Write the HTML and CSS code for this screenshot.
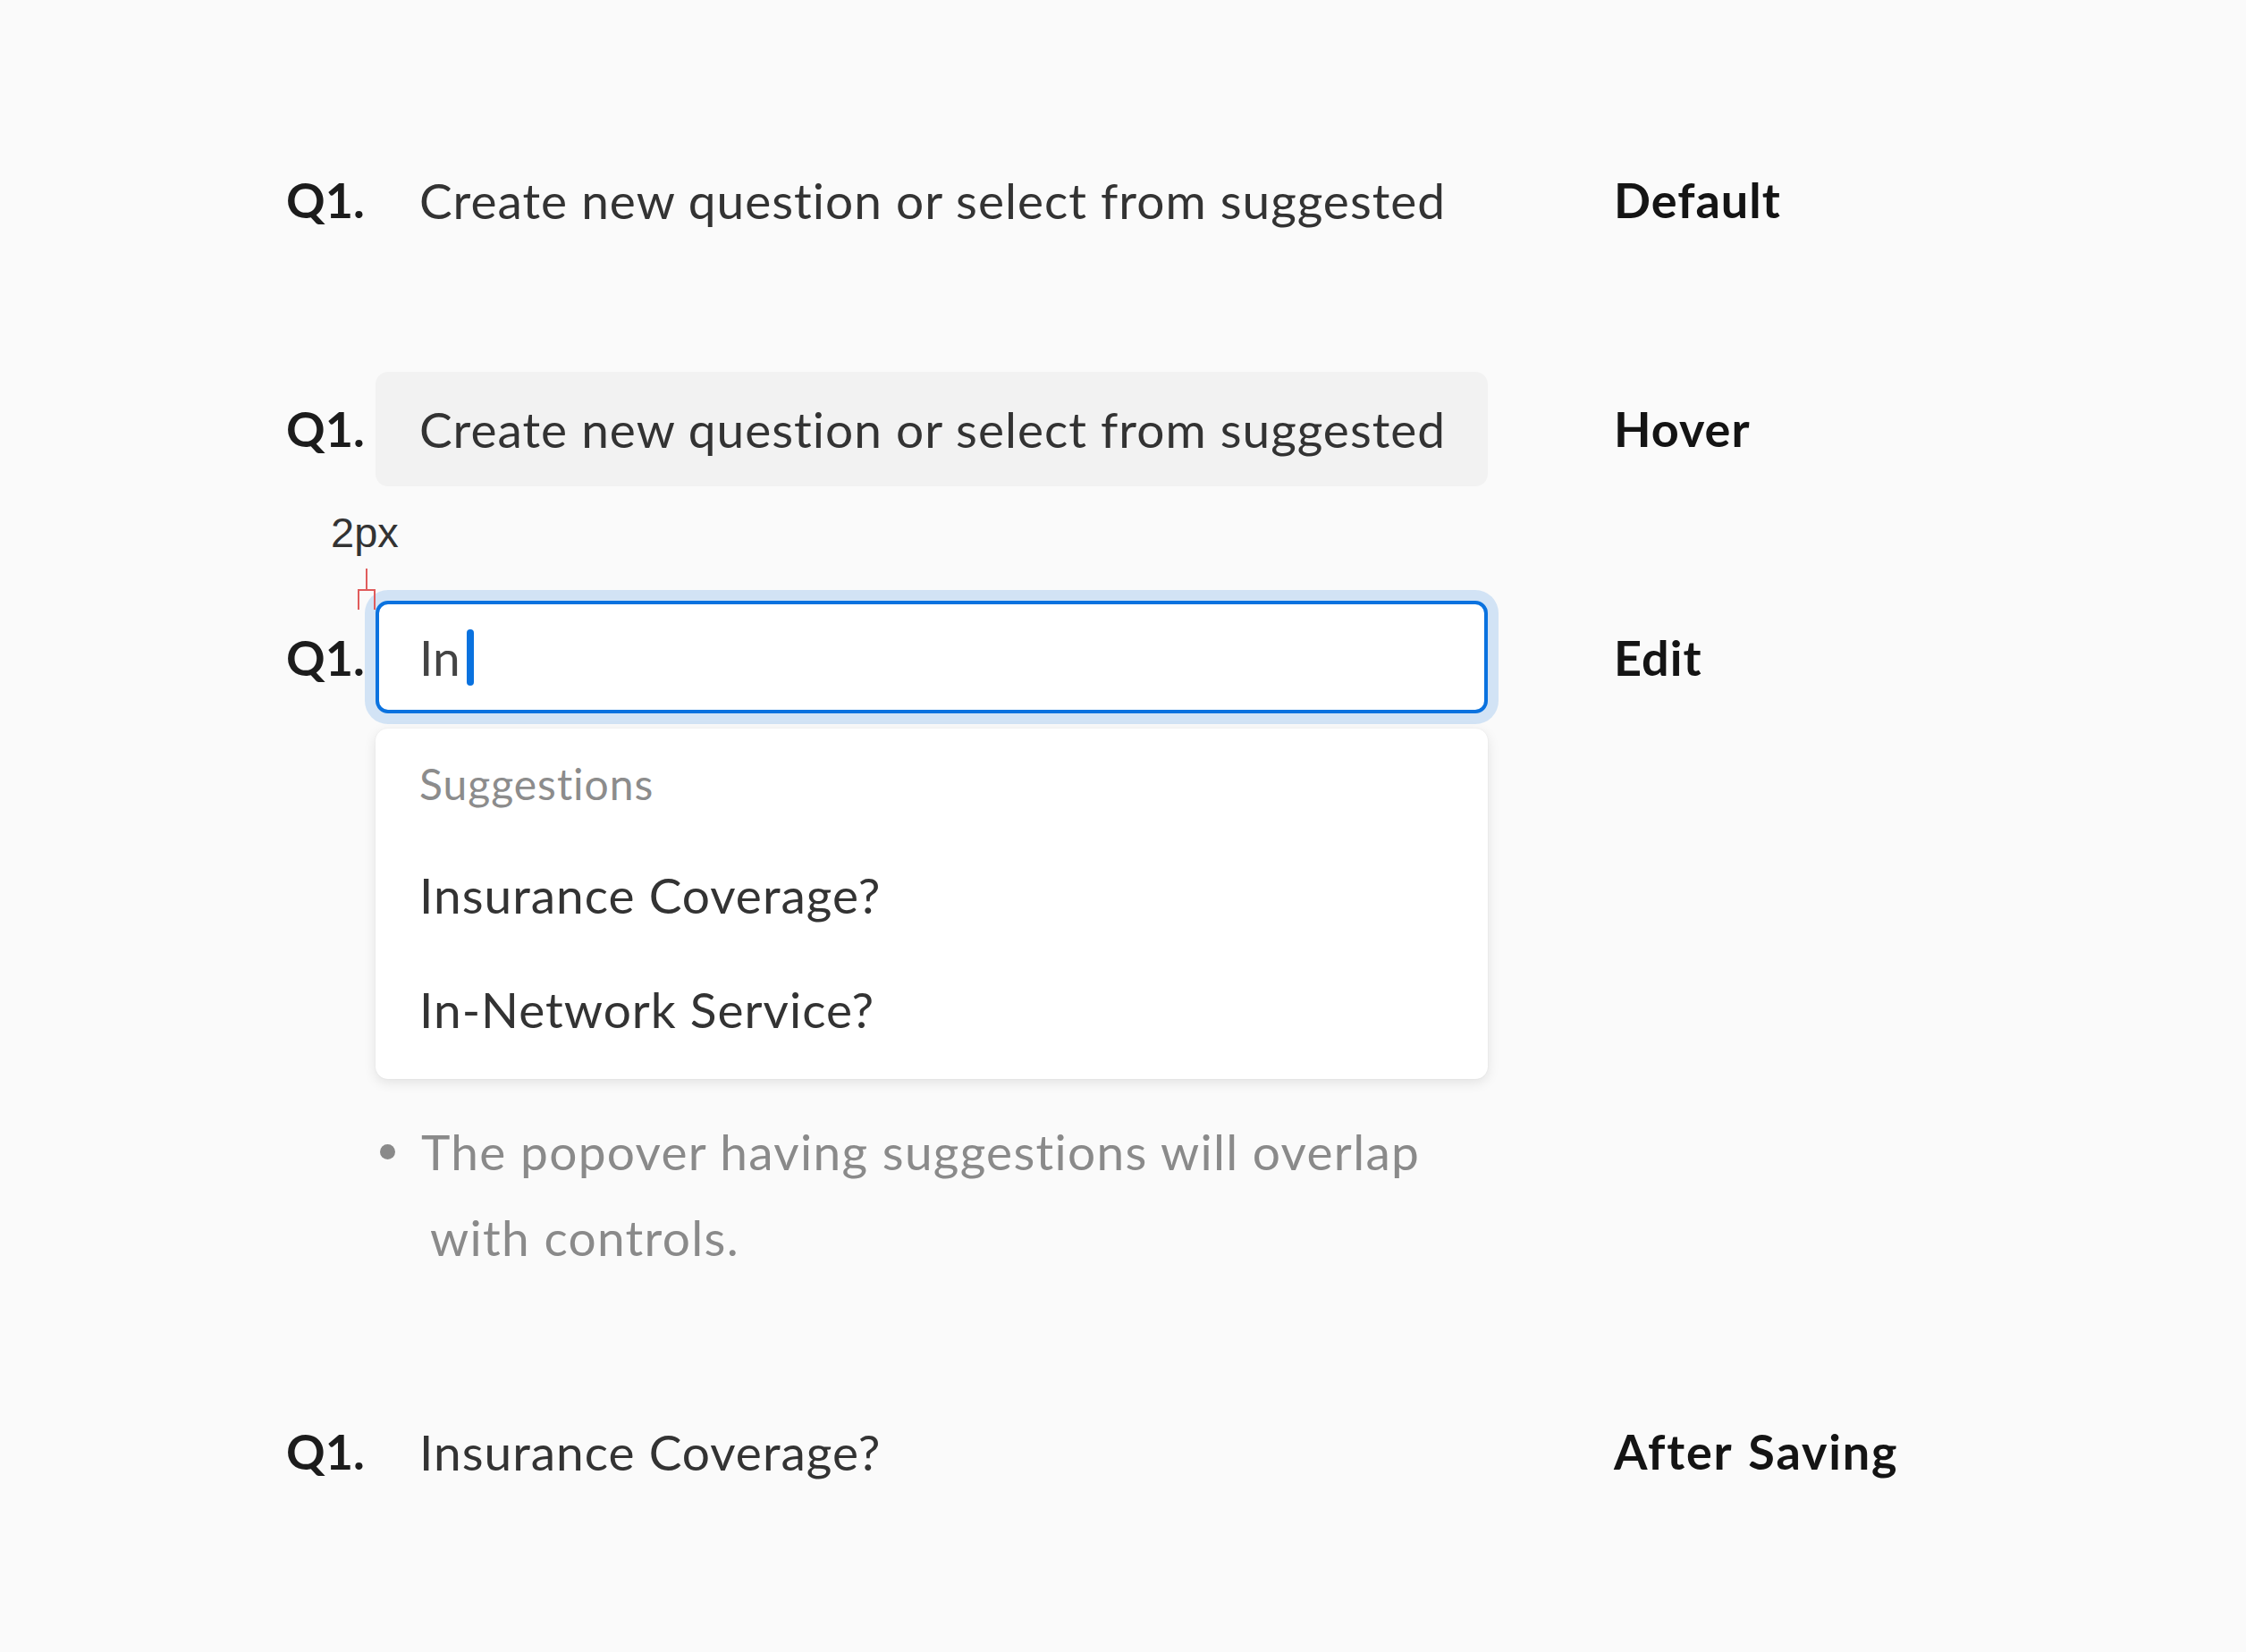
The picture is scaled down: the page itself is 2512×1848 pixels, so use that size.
FILE: index.html
```html
<!DOCTYPE html>
<html>
<head>
<meta charset="utf-8">
<link rel="stylesheet" href="styles.css">
</head>
<body>
<main class="page">
  <section class="row row-default">
    <div class="qnum">Q1.</div>
    <div class="field">Create new question or select from suggested</div>
    <div class="state">Default</div>
  </section>

  <section class="row row-hover">
    <div class="qnum">Q1.</div>
    <div class="field field-hover">Create new question or select from suggested</div>
    <div class="state">Hover</div>
  </section>

  <section class="row row-edit">
    <div class="qnum">Q1.</div>
    <div class="edit-col">
      <div class="field field-edit"><span class="typed">In</span><span class="caret"></span></div>
      <div class="popover">
        <div class="pop-head">Suggestions</div>
        <div class="pop-item">Insurance Coverage?</div>
        <div class="pop-item">In-Network Service?</div>
      </div>
      <div class="note">
        <div class="note-line"><span class="bullet"></span><span>The popover having suggestions will overlap</span></div>
        <div class="note-line note-cont">with controls.</div>
      </div>
    </div>
    <div class="state">Edit</div>
    <div class="annot">2px</div>
    <div class="marker">
      <span class="marker-stem"></span>
      <span class="marker-bracket"></span>
    </div>
  </section>

  <section class="row row-saved">
    <div class="qnum">Q1.</div>
    <div class="field">Insurance Coverage?</div>
    <div class="state state-wide">After Saving</div>
  </section>
</main>
</body>
</html>
```

FILE: styles.css
```css
* { box-sizing: border-box; }
html, body { margin: 0; padding: 0; }
body {
  background: #fafafa;
  width: 2512px;
  height: 1848px;
  font-family: Lato, "Open Sans", sans-serif;
  color: #333;
  overflow: hidden;
}
.page {
  padding: 160px 0 0 320px;
  display: flex;
  flex-direction: column;
  gap: 128px;
}
.row {
  position: relative;
  display: grid;
  grid-template-columns: 100px 1244px auto;
  align-items: start;
}
.qnum {
  height: 128px;
  line-height: 128px;
  font-weight: 700;
  font-size: 54px;
  color: #1c1c1c;
}
.field {
  height: 128px;
  line-height: 128px;
  padding-left: 49px;
  font-size: 55px;
  letter-spacing: 1px;
  color: #333;
  border-radius: 14px;
  white-space: nowrap;
}
.field-hover { background: #f2f2f2; }
.state {
  margin-left: 141px;
  height: 128px;
  line-height: 128px;
  font-weight: 700;
  font-size: 54px;
  letter-spacing: 1px;
  color: #141414;
}
.state-wide { word-spacing: 3px; letter-spacing: 1.8px; }
.edit-col { display: flex; flex-direction: column; }
.field-edit {
  height: 126px;
  line-height: 118px;
  padding-left: 45px;
  background: #fff;
  border: 4px solid #0a72df;
  border-radius: 14px;
  box-shadow: 0 0 0 12px #d2e3f5;
  display: flex;
  align-items: center;
}
.typed { color: #444; letter-spacing: 0; }
.caret {
  display: inline-block;
  width: 8px;
  height: 63px;
  margin-left: 7px;
  border-radius: 4px;
  background: #0a72df;
}
.popover {
  margin-top: 17px;
  background: #fff;
  border-radius: 14px;
  padding: 16px 0 14px;
  box-shadow: 0 4px 14px rgba(0,0,0,0.10), 0 0 2px rgba(0,0,0,0.06);
}
.pop-head {
  height: 92px;
  line-height: 92px;
  margin-bottom: 14px;
  padding-left: 49px;
  font-size: 48px;
  letter-spacing: 1px;
  color: #8c8c8c;
}
.pop-item {
  height: 128px;
  line-height: 128px;
  padding-left: 49px;
  font-size: 55px;
  letter-spacing: 1px;
  color: #333;
}
.note {
  margin-top: 33px;
  font-size: 55px;
  letter-spacing: 1.3px;
  color: #8a8a8a;
}
.note-line {
  height: 96px;
  line-height: 96px;
  display: flex;
  align-items: center;
}
.bullet {
  display: inline-block;
  width: 17px;
  height: 17px;
  border-radius: 50%;
  background: #8a8a8a;
  margin-left: 5px;
  margin-right: 29px;
}
.note-cont { padding-left: 61px; }
.annot {
  position: absolute;
  left: 50px;
  top: -106px;
  font-family: "Liberation Sans", Arial, sans-serif;
  font-size: 47px;
  line-height: 60px;
  color: #333;
}
.marker {
  position: absolute;
  left: 80px;
  top: -36px;
  width: 20px;
  height: 48px;
}
.marker-stem {
  position: absolute;
  left: 9px;
  top: 0;
  width: 2px;
  height: 24px;
  background: #e05c5c;
}
.marker-bracket {
  position: absolute;
  left: 0;
  top: 23px;
  width: 20px;
  height: 23px;
  border: 2px solid #e05c5c;
  border-bottom: none;
}
```
